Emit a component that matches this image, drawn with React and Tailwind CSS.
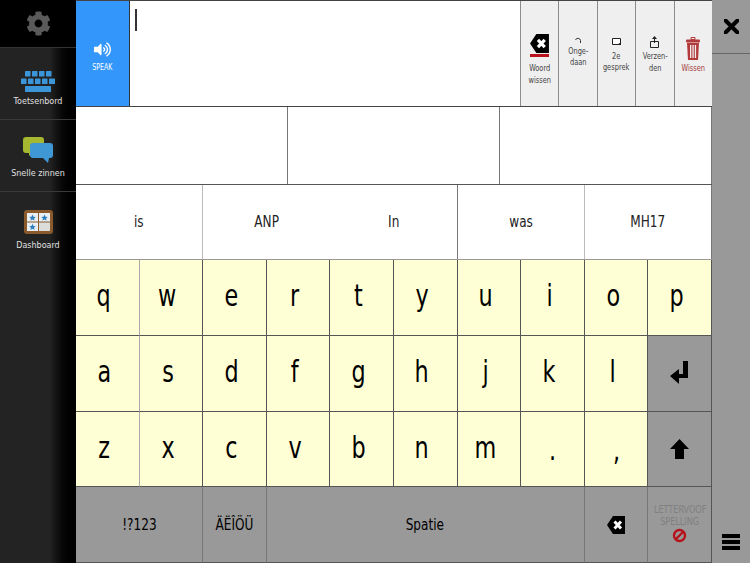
import { FaCog, FaVolumeUp } from 'react-icons/fa';

const FONT = "font-['DejaVu_Sans_Condensed','DejaVu_Sans',sans-serif]";

const ROWS = [
  ['q', 'w', 'e', 'r', 't', 'y', 'u', 'i', 'o', 'p'],
  ['a', 's', 'd', 'f', 'g', 'h', 'j', 'k', 'l'],
  ['z', 'x', 'c', 'v', 'b', 'n', 'm', '.', ','],
];

function BackspaceIcon({ size = 20, className = '' }) {
  return (
    <svg width={size} height={size} viewBox="0 0 20 20" className={className}>
      <path d="M7 1h12v18H7l-6-9z" fill="#000" />
      <path d="M8.5 6.5l6.5 7M15 6.5l-6.5 7" stroke="#fff" strokeWidth="3" />
    </svg>
  );
}

function KeyboardIcon() {
  return (
    <svg width="34" height="22" viewBox="0 0 34 22" className="mt-[7px]">
      <g fill="#3a96d8">
        <rect x="4" y="0" width="5.5" height="5.5" rx="0.5" />
        <rect x="11" y="0" width="5.5" height="5.5" rx="0.5" />
        <rect x="18" y="0" width="5.5" height="5.5" rx="0.5" />
        <rect x="25" y="0" width="5.5" height="5.5" rx="0.5" />
        <rect x="0" y="7.5" width="5.5" height="5.5" rx="0.5" />
        <rect x="7" y="7.5" width="5.5" height="5.5" rx="0.5" />
        <rect x="14" y="7.5" width="5.5" height="5.5" rx="0.5" />
        <rect x="21" y="7.5" width="5.5" height="5.5" rx="0.5" />
        <rect x="28" y="7.5" width="6" height="5.5" rx="0.5" />
        <rect x="4" y="15" width="26" height="6" rx="0.5" />
      </g>
    </svg>
  );
}

function ChatIcon() {
  return (
    <svg width="30" height="27" viewBox="0 0 30 27" className="mt-[1px]">
      <path d="M3 0h15a3 3 0 0 1 3 3v10a3 3 0 0 1-3 3H9l-3 3v-3H3a3 3 0 0 1-3-3V3a3 3 0 0 1 3-3z" fill="#a5b82f" />
      <path d="M10 6h17a3 3 0 0 1 3 3v9a3 3 0 0 1-3 3h-1l-1 5-5-5H10a3 3 0 0 1-3-3V9a3 3 0 0 1 3-3z" fill="#3f97d3" />
    </svg>
  );
}

function DashboardIcon() {
  return (
    <svg width="29" height="24" viewBox="0 0 29 24">
      <rect width="29" height="24" rx="3" fill="#8a5a2c" />
      <rect x="3" y="3" width="11" height="8.5" fill="#e8eef2" />
      <rect x="15" y="3" width="11" height="8.5" fill="#e8eef2" />
      <rect x="3" y="12.5" width="11" height="8.5" fill="#e8eef2" />
      <rect x="15" y="12.5" width="11" height="8.5" fill="#dcdcd8" />
      <g fill="#2f7fc0">
        <path d="M8.5 4.5l1 2.2 2.3.2-1.8 1.5.6 2.2-2.1-1.2-2.1 1.2.6-2.2-1.8-1.5 2.3-.2z" />
        <path d="M20.5 4.5l1 2.2 2.3.2-1.8 1.5.6 2.2-2.1-1.2-2.1 1.2.6-2.2-1.8-1.5 2.3-.2z" />
        <path d="M8.5 13.8l1 2.2 2.3.2-1.8 1.5.6 2.2-2.1-1.2-2.1 1.2.6-2.2-1.8-1.5 2.3-.2z" />
      </g>
    </svg>
  );
}

function SideItem({ icon, label, line = true, pad = 'pb-[11px]' }) {
  return (
    <div className={`h-[72px] flex flex-col items-center justify-end ${pad} ${line ? 'border-b border-[#3a3a3a]' : ''}`}>
      <div className="h-[32px] flex items-center justify-center">{icon}</div>
      <span className="mt-[2px] text-[8px] leading-[12px] text-[#e0e0e0] font-['DejaVu_Sans',sans-serif]">{label}</span>
    </div>
  );
}

function ToolButton({ icon, lines, pad, red }) {
  return (
    <div className={`flex-1 flex flex-col items-center justify-center ${pad} bg-[#efefef] border-l border-[#8c8c8c]`}>
      {icon}
      <span className={`block mt-[3px] text-[9px] leading-[11.5px] text-center whitespace-nowrap scale-x-[.82] ${red ? 'text-[#a23a3a]' : 'text-[#444]'}`}>
        {lines.map((l) => (
          <span key={l} className="block">{l}</span>
        ))}
      </span>
    </div>
  );
}

function Key({ children, span = 'col-span-1', tone = 'bg-[#ffffd6]', line = 'border-[#555]' }) {
  return (
    <div className={`${span} ${tone} flex items-center justify-center border-r border-b ${line} border-b-[#555] text-black`}>
      {children}
    </div>
  );
}

function Letter({ k }) {
  const punct = k === '.' || k === ',';
  return <span className={`block scale-x-[.8] ${punct ? '' : 'pr-[8px] pb-[4px]'}`}>{k}</span>;
}

function Label({ children }) {
  return <span className="block scale-x-[.84] whitespace-nowrap text-[16px]">{children}</span>;
}

export default function App() {
  return (
    <div className={`w-[750px] h-[563px] overflow-hidden flex bg-[#999] ${FONT}`}>
      <aside className="w-[76px] h-full flex flex-col bg-gradient-to-r from-[#232323] from-65% to-black">
        <div className="h-[48px] bg-black flex items-center justify-center border-b border-[#333]">
          <FaCog size={25} color="#5a5a5a" />
        </div>
        <SideItem icon={<KeyboardIcon />} label="Toetsenbord" />
        <SideItem icon={<ChatIcon />} label="Snelle zinnen" />
        <SideItem icon={<DashboardIcon />} label="Dashboard" line={false} pad="pb-[12px]" />
      </aside>

      <main className="w-[636px] h-full flex flex-col">
        <div className="h-[107px] flex bg-white border-t border-b border-[#444]">
          <div className="w-[54px] bg-[#3396fb] border-r border-[#333] flex flex-col items-center justify-center pt-[6px] text-white">
            <FaVolumeUp size={17} />
            <span className="block mt-[4px] text-[8.5px] leading-[10px] scale-x-[.82]">SPEAK</span>
          </div>
          <div className="w-[390px] pl-[5px] pt-[8px]">
            <div className="w-[2px] h-[22px] bg-[#333]" />
          </div>
          <div className="flex-1 flex">
            <ToolButton
              pad="pt-[12px]"
              icon={
                <div className="flex flex-col items-center mb-[3px]">
                  <BackspaceIcon size={21} />
                  <div className="w-[19px] h-[3px] bg-[#b8121b]" />
                </div>
              }
              lines={['Woord', 'wissen']}
            />
            <ToolButton
              pad="pb-[2px]"
              icon={
                <svg width="8" height="8" viewBox="0 0 8 8" className="mb-[-2px]">
                  <path d="M1.5 3a2.6 2.6 0 0 1 5 .5V6" fill="none" stroke="#333" strokeWidth="1" />
                </svg>
              }
              lines={['Onge-', 'daan']}
            />
            <ToolButton
              pad="pt-[4px]"
              icon={
                <svg width="10" height="10" viewBox="0 0 10 10">
                  <path d="M.5 .5h8v6h-8z" fill="#fff" stroke="#222" />
                  <path d="M5 7h4V4z" fill="#222" />
                </svg>
              }
              lines={['2e', 'gesprek']}
            />
            <ToolButton
              pad="pt-[3px]"
              icon={
                <svg width="9" height="12" viewBox="0 0 9 12">
                  <path d="M4.5 0L2 3h5zM4 3h1v4H4z" fill="#222" />
                  <path d="M.5 5.5h8v6h-8z" fill="none" stroke="#222" />
                </svg>
              }
              lines={['Verzen-', 'den']}
            />
            <ToolButton
              red
              pad="pt-[4px]"
              icon={
                <svg width="14" height="23" viewBox="0 0 14 23">
                  <path d="M5 .5h4v2H5z" fill="none" stroke="#b23a3a" />
                  <rect x="0" y="2.5" width="14" height="3" rx="1" fill="#b23a3a" />
                  <path d="M1 6h12l-1 17H2z" fill="#b23a3a" />
                  <path d="M4 8h1.3v13H4zM6.4 8h1.3v13H6.4zM8.8 8h1.3v13H8.8z" fill="#efefef" />
                </svg>
              }
              lines={['Wissen']}
            />
          </div>
        </div>

        <div className="h-[78px] grid grid-cols-3 bg-white border-b border-[#555]">
          <div className="border-r border-[#777]" />
          <div className="border-r border-[#777]" />
          <div className="border-r border-[#777]" />
        </div>

        <div className="h-[75px] grid grid-cols-10 bg-white text-[#222] border-b border-[#999]">
          <div className="col-span-2 flex items-center justify-center border-r border-[#bbb]"><Label>is</Label></div>
          <div className="col-span-2 flex items-center justify-center"><Label>ANP</Label></div>
          <div className="col-span-2 flex items-center justify-center border-r border-[#777]"><Label>In</Label></div>
          <div className="col-span-2 flex items-center justify-center border-r border-[#bbb]"><Label>was</Label></div>
          <div className="col-span-2 flex items-center justify-center border-r border-[#777]"><Label>MH17</Label></div>
        </div>

        <div className="flex-1 grid grid-cols-10 grid-rows-4 text-[31px]">
          {ROWS[0].map((k, i) => (
            <Key key={k} line={i === 0 ? 'border-[#aaa]' : 'border-[#555]'}><Letter k={k} /></Key>
          ))}
          {ROWS[1].map((k, i) => (
            <Key key={k} line={i === 0 ? 'border-[#aaa]' : 'border-[#555]'}><Letter k={k} /></Key>
          ))}
          <Key tone="bg-[#999]">
            <svg width="19" height="24" viewBox="0 0 19 24">
              <path d="M13 0h5v17H9v6L0 15l9-7v5h4z" fill="#000" />
            </svg>
          </Key>
          {ROWS[2].map((k, i) => (
            <Key key={k} line={i === 0 ? 'border-[#aaa]' : 'border-[#555]'}><Letter k={k} /></Key>
          ))}
          <Key tone="bg-[#999]">
            <svg width="19" height="20" viewBox="0 0 19 20">
              <path d="M9.5 0L19 10h-5v10H5V10H0z" fill="#000" />
            </svg>
          </Key>
          <Key span="col-span-2" tone="bg-[#999] text-[#222]" line="border-[#777]"><Label>!?123</Label></Key>
          <Key tone="bg-[#999] text-[#222]" line="border-[#777]"><Label>ÄËÎÖÜ</Label></Key>
          <Key span="col-span-5" tone="bg-[#999] text-[#222]" line="border-[#777]"><Label>Spatie</Label></Key>
          <Key tone="bg-[#999]" line="border-[#777]">
            <BackspaceIcon size={20} />
          </Key>
          <Key tone="bg-[#999]">
            <div className="flex flex-col items-center pb-[3px] text-[10px] leading-[12px] text-[#808080]">
              <span className="block whitespace-nowrap scale-x-[.9]">LETTERVOOF</span>
              <span className="block scale-x-[.9]">SPELLING</span>
              <svg width="15" height="15" viewBox="0 0 15 15">
                <circle cx="7.5" cy="7.5" r="5.5" fill="none" stroke="#b5121b" strokeWidth="2.4" />
                <path d="M3.5 11.5l8-8" stroke="#b5121b" strokeWidth="2.4" />
              </svg>
            </div>
          </Key>
        </div>
      </main>

      <div className="flex-1 h-full flex flex-col bg-[#999]">
        <div className="h-[54px] flex items-center justify-center border-b border-[#666]">
          <svg width="15" height="15" viewBox="0 0 15 15">
            <path d="M1.5 1.5l12 12M13.5 1.5l-12 12" stroke="#000" strokeWidth="4" strokeLinecap="round" />
          </svg>
        </div>
        <div className="mt-auto mb-[13px] flex flex-col items-center gap-[2px]">
          <div className="w-[18px] h-[4px] bg-black" />
          <div className="w-[18px] h-[4px] bg-black" />
          <div className="w-[18px] h-[4px] bg-black" />
        </div>
      </div>
    </div>
  );
}
